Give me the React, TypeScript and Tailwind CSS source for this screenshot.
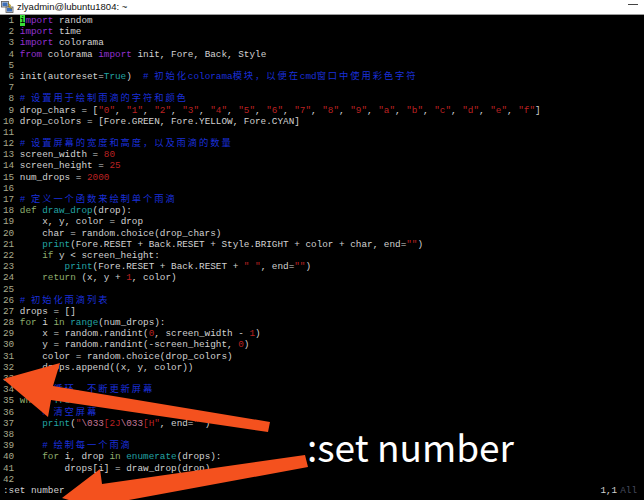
import type { ReactNode } from 'react';

const CODE = [
  'import random',
  'import time',
  'import colorama',
  'from colorama import init, Fore, Back, Style',
  '',
  'init(autoreset=True)  # 初始化colorama模块，以便在cmd窗口中使用彩色字符',
  '',
  '# 设置用于绘制雨滴的字符和颜色',
  'drop_chars = ["0", "1", "2", "3", "4", "5", "6", "7", "8", "9", "a", "b", "c", "d", "e", "f"]',
  'drop_colors = [Fore.GREEN, Fore.YELLOW, Fore.CYAN]',
  '',
  '# 设置屏幕的宽度和高度，以及雨滴的数量',
  'screen_width = 80',
  'screen_height = 25',
  'num_drops = 2000',
  '',
  '# 定义一个函数来绘制单个雨滴',
  'def draw_drop(drop):',
  '    x, y, color = drop',
  '    char = random.choice(drop_chars)',
  '    print(Fore.RESET + Back.RESET + Style.BRIGHT + color + char, end="")',
  '    if y < screen_height:',
  '        print(Fore.RESET + Back.RESET + " ", end="")',
  '    return (x, y + 1, color)',
  '',
  '# 初始化雨滴列表',
  'drops = []',
  'for i in range(num_drops):',
  '    x = random.randint(0, screen_width - 1)',
  '    y = random.randint(-screen_height, 0)',
  '    color = random.choice(drop_colors)',
  '    drops.append((x, y, color))',
  '',
  '# 无限循环，不断更新屏幕',
  'while True:',
  '    # 清空屏幕',
  '    print("\\033[2J\\033[H", end="")',
  '',
  '    # 绘制每一个雨滴',
  '    for i, drop in enumerate(drops):',
  '        drops[i] = draw_drop(drop)',
  '',
];

const INCLUDE = new Set(['import', 'from']);
const STATEMENT = new Set(['def', 'for', 'in', 'if', 'return', 'while']);
const BUILTIN = new Set(['print', 'range', 'enumerate', 'True']);

// full-width glyphs take two cells in the terminal
function Comment({ text }: { text: string }) {
  const parts = text.split(/([\u3000-\u9fff\uff00-\uffef]+)/);
  return (
    <span className="text-[#1a2fd8]">
      {parts.map((p, i) =>
        i % 2 === 1 ? (
          <span key={i} className="tracking-[1.87px]">
            {p}
          </span>
        ) : (
          <span key={i}>{p}</span>
        )
      )}
    </span>
  );
}

function StringTok({ text }: { text: string }) {
  const parts = text.split(/(\\033)/);
  return (
    <span className="text-[#bb2222]">
      {parts.map((p, i) =>
        i % 2 === 1 ? (
          <span key={i} className="text-[#c67a9a]">
            {p}
          </span>
        ) : (
          <span key={i}>{p}</span>
        )
      )}
    </span>
  );
}

function highlight(line: string): ReactNode[] {
  const out: ReactNode[] = [];
  const re = /(#.*$)|("(?:[^"\\]|\\.)*")|(\b\d+\b)|([A-Za-z_]\w*)|([^#"A-Za-z_\d]+)/g;
  let m: RegExpExecArray | null;
  let prev = '';
  let k = 0;
  while ((m = re.exec(line))) {
    const [tok, comment, str, num, word] = m;
    if (comment) out.push(<Comment key={k++} text={comment} />);
    else if (str) out.push(<StringTok key={k++} text={str} />);
    else if (num) out.push(<span key={k++} className="text-[#bb2222]">{num}</span>);
    else if (word) {
      let cls = '';
      if (INCLUDE.has(word)) cls = 'text-[#9330d2]';
      else if (STATEMENT.has(word)) cls = 'text-[#8fae6e]';
      else if (BUILTIN.has(word) || prev === 'def') cls = 'text-[#22a3a3]';
      out.push(
        <span key={k++} className={cls}>
          {word}
        </span>
      );
      prev = word;
    } else out.push(<span key={k++}>{tok}</span>);
  }
  return out;
}

function PuttyIcon() {
  return (
    <svg width="13" height="13" viewBox="0 0 13 13">
      <rect x="0.5" y="0.5" width="7" height="5.5" fill="#cfd6e0" stroke="#555" strokeWidth="0.8" />
      <rect x="1.5" y="1.5" width="5" height="3.5" fill="#3d6fb8" />
      <rect x="5" y="6" width="7" height="5.5" fill="#cfd6e0" stroke="#555" strokeWidth="0.8" />
      <rect x="6" y="7" width="5" height="3.5" fill="#3d6fb8" />
      <path d="M7 2 L10 4.5 L8.5 5 L11 8 L7.5 5.8 L9 5.3 Z" fill="#f5d000" stroke="#8a6a00" strokeWidth="0.4" />
    </svg>
  );
}

export default function App() {
  return (
    <div className="relative w-[644px] h-[500px] overflow-hidden bg-black">
      <div className="flex h-[15px] items-center border-b border-[#9c9c9c] bg-white pl-[1px] pr-[6px]">
        <PuttyIcon />
        <span className="ml-[3px] font-['Liberation_Sans',sans-serif] text-[9.5px] leading-none text-[#111]">
          zlyadmin@lubuntu1804: ~
        </span>
        <span className="ml-auto mb-[5px] h-[1px] w-[10px] bg-[#444]" />
      </div>

      <div className="pl-[3px] font-['Liberation_Mono','Noto_Sans_CJK_SC',monospace] text-[9.33px] leading-[11.2px] text-[#d2d2d2]">
        {CODE.map((line, i) => (
          <div key={i} className="h-[11.2px] whitespace-pre">
            <span className="text-[#a9aa8c]">{String(i + 1).padStart(2, ' ')} </span>
            {i === 0 ? (
              <>
                <span className="bg-[#38e038] text-black">i</span>
                <span className="text-[#9330d2]">mport</span>
                <span> random</span>
              </>
            ) : (
              highlight(line)
            )}
          </div>
        ))}
        <div className="flex h-[11.2px] whitespace-pre">
          <span>:set number</span>
          <span className="ml-auto mr-[7px]">
            1,1<span className="ml-[3px] text-[#454b5e]">All</span>
          </span>
        </div>
      </div>

      <svg className="absolute inset-0" width="644" height="500" viewBox="0 0 644 500">
        <polygon
          points="3,379 60,363 53,386 270,422 268,432 51,400 48,417"
          fill="#f4511e"
        />
        <polygon
          points="62,498 100,469 102,484 305,455 308,467 118,502 110,512"
          fill="#f4511e"
        />
      </svg>

      <div className="absolute left-[307px] top-[428px] font-['Noto_Sans_CJK_SC','Noto_Sans',sans-serif] text-[37px] leading-none text-white">
        :set number
      </div>
    </div>
  );
}
